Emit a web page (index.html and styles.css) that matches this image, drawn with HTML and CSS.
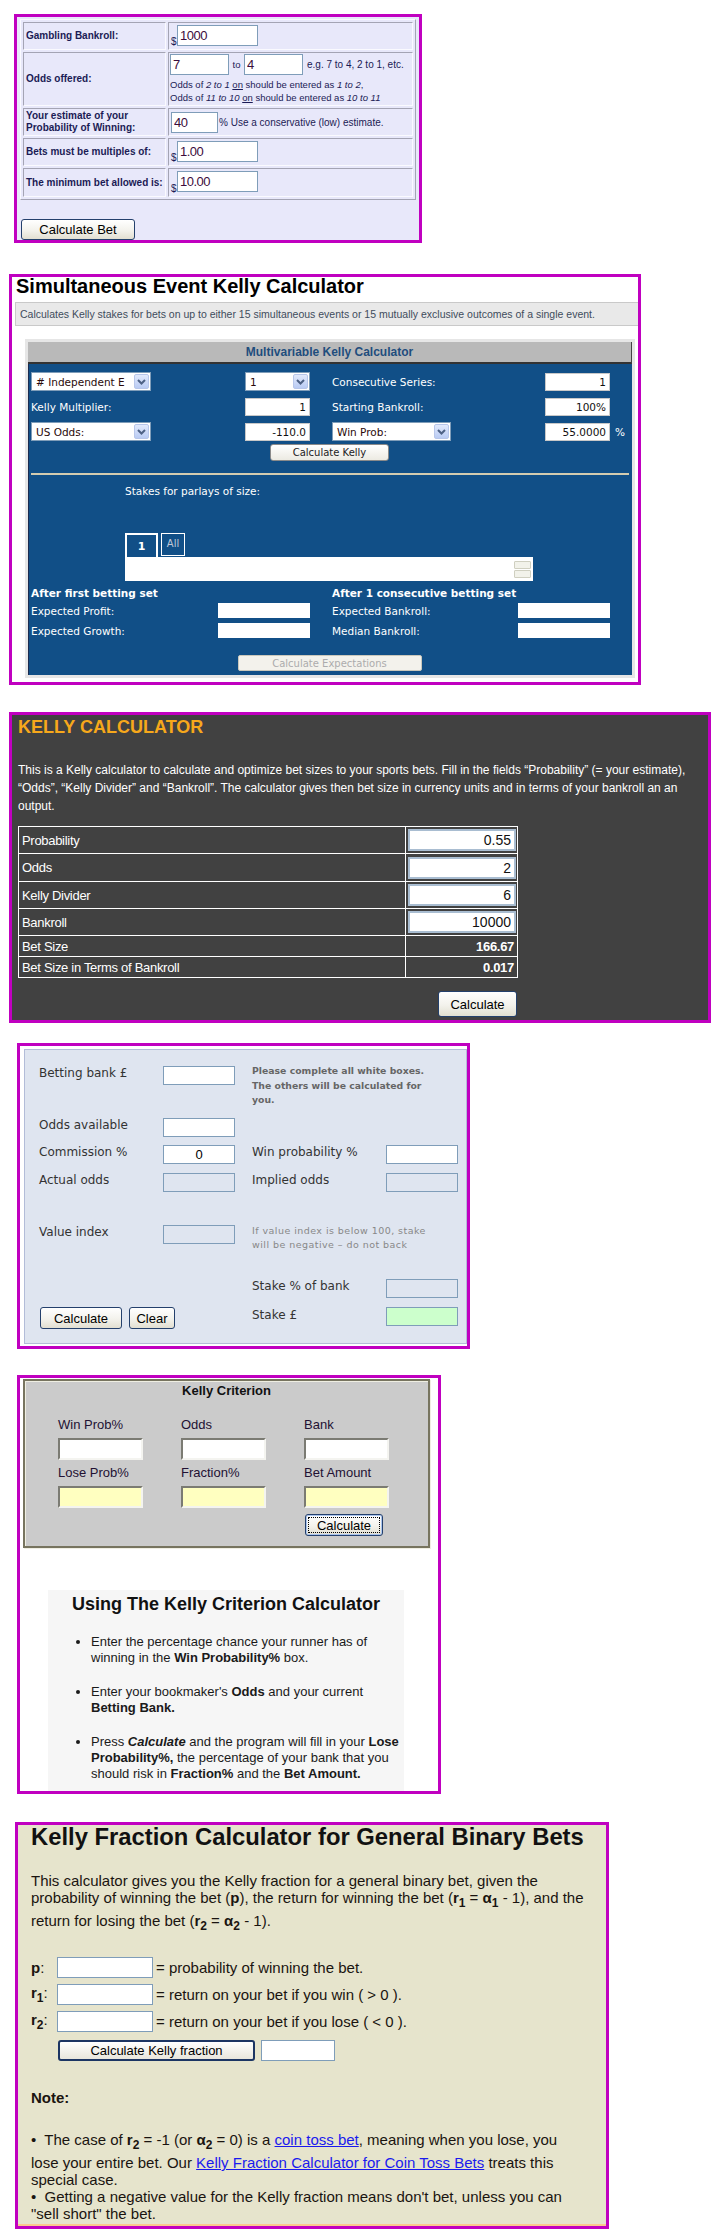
FILE: index.html
```html
<!DOCTYPE html>
<html>
<head>
<meta charset="utf-8">
<title>Kelly Calculators</title>
<link rel="stylesheet" href="styles.css">
</head>
<body>

<div class="s1">
  <table class="bt">
    <tr class="h28"><td class="lab">Gambling Bankroll:</td><td class="val"><span class="dol">$</span><input class="in1" value="1000"></td></tr>
    <tr class="h54"><td class="lab">Odds offered:</td><td class="val">
      <div class="oddsline"><input class="in2" value="7"><span class="to">to</span><input class="in2" value="4"><span class="eg">e.g. 7 to 4, 2 to 1, etc.</span></div>
      <div class="note1">Odds of <i>2 to 1</i> <u>on</u> should be entered as <i>1 to 2</i>,<br>Odds of <i>11 to 10</i> <u>on</u> should be entered as <i>10 to 11</i></div>
    </td></tr>
    <tr class="h28"><td class="lab">Your estimate of your<br>Probability of Winning:</td><td class="val"><input class="in3" value="40"><span class="eg pct">% Use a conservative (low) estimate.</span></td></tr>
    <tr class="h28"><td class="lab">Bets must be multiples of:</td><td class="val"><span class="dol">$</span><input class="in1" value="1.00"></td></tr>
    <tr class="h29"><td class="lab">The minimum bet allowed is:</td><td class="val"><span class="dol">$</span><input class="in1" value="10.00"></td></tr>
  </table>
  <button class="xpbtn calcbet">Calculate Bet</button>
</div>

<div class="s2">
  <h1 class="sek">Simultaneous Event Kelly Calculator</h1>
  <div class="desc">Calculates Kelly stakes for bets on up to either 15 simultaneous events or 15 mutually exclusive outcomes of a single event.</div>
  <div class="mk">
    <div class="mkhead">Multivariable Kelly Calculator</div>
    <div class="mkbody">
      <div class="mkgrid">
        <div class="half">
          <div class="mrow">
            <div class="sel w120"><span class="st"># Independent E</span><span class="arr"><svg width="9" height="6" viewBox="0 0 9 6"><path d="M1 1 L4.5 4.5 L8 1" fill="none" stroke="#4d6185" stroke-width="2"/></svg></span></div>
            <div class="sel w65 push"><span class="st">1</span><span class="arr"><svg width="9" height="6" viewBox="0 0 9 6"><path d="M1 1 L4.5 4.5 L8 1" fill="none" stroke="#4d6185" stroke-width="2"/></svg></span></div>
          </div>
          <div class="mrow"><span>Kelly Multiplier:</span><input class="nin push" value="1"></div>
          <div class="mrow">
            <div class="sel w120"><span class="st">US Odds:</span><span class="arr"><svg width="9" height="6" viewBox="0 0 9 6"><path d="M1 1 L4.5 4.5 L8 1" fill="none" stroke="#4d6185" stroke-width="2"/></svg></span></div>
            <input class="nin push" value="-110.0">
          </div>
        </div>
        <div class="half">
          <div class="mrow"><span>Consecutive Series:</span><input class="nin push" value="1"><span class="unit"></span></div>
          <div class="mrow"><span>Starting Bankroll:</span><input class="nin push" value="100%"><span class="unit"></span></div>
          <div class="mrow">
            <div class="sel w119"><span class="st">Win Prob:</span><span class="arr"><svg width="9" height="6" viewBox="0 0 9 6"><path d="M1 1 L4.5 4.5 L8 1" fill="none" stroke="#4d6185" stroke-width="2"/></svg></span></div>
            <input class="nin push" value="55.0000"><span class="unit">%</span>
          </div>
        </div>
      </div>
      <div class="ckwrap"><button class="ckbtn">Calculate Kelly</button></div>
      <div class="sep"></div>
      <div class="stakes">
        <div class="stt">Stakes for parlays of size:</div>
        <div class="tabs"><span class="tab1">1</span><span class="tab2">All</span></div>
        <div class="sbox"><span class="spin"><i></i><i></i></span></div>
      </div>
      <div class="mkgrid after">
        <div class="half">
          <div class="ah">After first betting set</div>
          <div class="arow"><span>Expected Profit:</span><input class="ain"></div>
          <div class="arow"><span>Expected Growth:</span><input class="ain"></div>
        </div>
        <div class="half">
          <div class="ah">After 1 consecutive betting set</div>
          <div class="arow"><span>Expected Bankroll:</span><input class="ain"><span class="unit"></span></div>
          <div class="arow"><span>Median Bankroll:</span><input class="ain"><span class="unit"></span></div>
        </div>
      </div>
      <div class="ckwrap"><button class="cebtn" disabled>Calculate Expectations</button></div>
    </div>
  </div>
</div>

<div class="s3">
  <h2 class="kc">KELLY CALCULATOR</h2>
  <p class="kcp">This is a Kelly calculator to calculate and optimize bet sizes to your sports bets. Fill in the fields “Probability” (= your estimate),<br>“Odds”, “Kelly Divider” and “Bankroll”. The calculator gives then bet size in currency units and in terms of your bankroll an an<br>output.</p>
  <table class="kt">
    <tr class="ri"><td>Probability</td><td class="v"><input value="0.55"></td></tr>
    <tr class="ri2"><td>Odds</td><td class="v"><input value="2"></td></tr>
    <tr class="ri"><td>Kelly Divider</td><td class="v"><input value="6"></td></tr>
    <tr class="ri"><td>Bankroll</td><td class="v"><input value="10000"></td></tr>
    <tr class="rr"><td>Bet Size</td><td class="v b">166.67</td></tr>
    <tr class="rr"><td>Bet Size in Terms of Bankroll</td><td class="v b">0.017</td></tr>
  </table>
  <div class="kcbw"><button class="xpbtn kcb">Calculate</button></div>
</div>

<div class="s4">
  <div class="vp">
    <div class="vg">
      <span class="vl c1">Betting bank £</span><input class="vi w c2"><div class="vn1">Please complete all white boxes.<br>The others will be calculated for<br>you.</div>
      <span class="vl c1">Odds available</span><input class="vi w c2">
      <span class="vl c1">Commission %</span><input class="vi w c2" value="0"><span class="vl c4">Win probability %</span><input class="vi w c5">
      <span class="vl c1">Actual odds</span><input class="vi c2"><span class="vl c4">Implied odds</span><input class="vi c5">
      <span class="vl c1">Value index</span><input class="vi c2"><div class="vn2">If value index is below 100, stake<br>will be negative – do not back</div>
      <span class="vl c4">Stake % of bank</span><input class="vi c5">
      <div class="vbtns"><button class="xpbtn vb1">Calculate</button><button class="xpbtn vb2">Clear</button></div><span class="vl c4 st8">Stake £</span><input class="vi g c5">
    </div>
  </div>
</div>

<div class="s5">
  <div class="kcf">
    <div class="kct">Kelly Criterion</div>
    <div class="kg">
      <span>Win Prob%</span><span>Odds</span><span>Bank</span>
      <input class="ki"><input class="ki"><input class="ki">
      <span>Lose Prob%</span><span>Fraction%</span><span>Bet Amount</span>
      <input class="ki y"><input class="ki y"><input class="ki y">
      <button class="xpbtn kgb">Calculate</button>
    </div>
  </div>
  <div class="use">
    <h3>Using The Kelly Criterion Calculator</h3>
    <ul>
      <li>Enter the percentage chance your runner has of<br>winning in the <b>Win Probability%</b> box.</li>
      <li>Enter your bookmaker's <b>Odds</b> and your current<br><b>Betting Bank.</b></li>
      <li>Press <b><i>Calculate</i></b> and the program will fill in your <b>Lose<br>Probability%,</b> the percentage of your bank that you<br>should risk in <b>Fraction%</b> and the <b>Bet Amount.</b></li>
    </ul>
  </div>
</div>

<div class="s6">
  <div class="kfin">
    <h2 class="kf">Kelly Fraction Calculator for General Binary Bets</h2>
    <p class="kfp">This calculator gives you the Kelly fraction for a general binary bet, given the<br>probability of winning the bet (<b>p</b>), the return for winning the bet (<b>r<sub>1</sub></b> = <b>α<sub>1</sub></b> - 1), and the<br>return for losing the bet (<b>r<sub>2</sub></b> = <b>α<sub>2</sub></b> - 1).</p>
    <div class="kfrows">
      <div class="kfrow"><span class="kfl"><b>p</b>:</span><input class="kfi"><span class="kft">= probability of winning the bet.</span></div>
      <div class="kfrow"><span class="kfl"><b>r<sub>1</sub></b>:</span><input class="kfi"><span class="kft">= return on your bet if you win ( &gt; 0 ).</span></div>
      <div class="kfrow"><span class="kfl"><b>r<sub>2</sub></b>:</span><input class="kfi"><span class="kft">= return on your bet if you lose ( &lt; 0 ).</span></div>
    </div>
    <div class="kfbr"><button class="kfb">Calculate Kelly fraction</button><input class="kfo"></div>
    <div class="kfnote">Note:</div>
    <p class="kfn">&bull;&nbsp; The case of <b>r<sub>2</sub></b> = -1 (or <b>α<sub>2</sub></b> = 0) is a <a href="#">coin toss bet</a>, meaning when you lose, you<br>lose your entire bet. Our <a href="#">Kelly Fraction Calculator for Coin Toss Bets</a> treats this<br>special case.<br>&bull;&nbsp; Getting a negative value for the Kelly fraction means don't bet, unless you can<br>"sell short" the bet.</p>
  </div>
  <div class="kfend"></div>
</div>

</body>
</html>
```

FILE: styles.css
```css
* { box-sizing: border-box; }
body { margin: 0; font-family: "Liberation Sans", Arial, sans-serif; background: #fff; color: #000; }
input, button { margin: 0; font-family: "Liberation Sans", Arial, sans-serif; }

.s1, .s2, .s3, .s4, .s5, .s6 { border: 3px solid #c000c0; }

.xpbtn {
  font-size: 13px; color: #000; padding: 0;
  background: linear-gradient(#ffffff, #f3f2ec 55%, #e2dfd1);
  border: 1px solid #24406c; border-radius: 3px;
}

/* ---------- section 1 ---------- */
.s1 { margin: 14px 0 0 14px; width: 408px; background: #e8e8fa; padding: 2px 2px 0 3px; }
.bt { border-collapse: separate; border-spacing: 2px; border: 1px solid; border-color: #fafaff #a4a4b4 #a4a4b4 #fafaff; width: 396px; table-layout: fixed; }
.bt td { border: 1px solid; border-color: #a4a4b4 #fafaff #fafaff #a4a4b4; padding: 0 2px; vertical-align: middle; color: #1b1b55; }
.bt td.lab { width: 143px; font-size: 10px; font-weight: bold; line-height: 12px; }
.h28 { height: 28px; } .h54 { height: 54px; } .h29 { height: 29px; }
.dol { display: inline-block; width: 6px; font-size: 10px; vertical-align: -6px; }
.bt input { height: 21px; border: 1px solid #7f9db9; background: #fff; font-size: 13px; color: #3c0c3c; padding: 0 2px; vertical-align: middle; letter-spacing: -0.5px; }
.in1 { width: 81px; } .in2 { width: 59px; } .in3 { width: 47px; }
.oddsline { white-space: nowrap; margin-left: -1px; }
.to { display: inline-block; width: 15px; text-align: center; font-size: 9.5px; vertical-align: middle; }
.eg { font-size: 10px; margin-left: 4px; vertical-align: middle; }
.eg.pct { margin-left: 1px; }
.note1 { font-size: 9.5px; line-height: 13px; margin-top: 3px; white-space: nowrap; margin-left: -1px; }
.calcbet { display: block; width: 114px; height: 21px; margin: 19px 0 0 1px; }

/* ---------- section 2 ---------- */
.s2 { margin: 31px 0 0 9px; width: 632px; background: #fff; padding: 0 0 4px 0; }
.sek { margin: 0 0 7px 4px; font-size: 20px; line-height: 18px; font-weight: bold; color: #000; }
.desc { margin: 0 0 0 3px; height: 24px; border: 1px solid #c9c9c9; border-right: 0; background: #e9e9e9; font-size: 10.5px; line-height: 22px; padding-left: 4px; color: #3e4c5c; white-space: nowrap; }
.mk { margin: 13px 3px 0 13px; background: #e6e6e6; padding: 3px; }
.mkhead { height: 22px; background: #b9b9b9; border-bottom: 2px solid #333; border-right: 1px solid #444; text-align: center; font-size: 12px; font-weight: bold; color: #1f4d7d; line-height: 21px; }
.mkbody { background: #114f87; border-left: 1px solid #1b2c50; padding: 8px 0 4px 2px; font-family: "DejaVu Sans", Verdana, sans-serif; font-size: 10.5px; color: #fff; }
.mkgrid { display: grid; grid-template-columns: 279px 294px; column-gap: 22px; }
.half { display: flex; flex-direction: column; gap: 6px; }
.mrow { display: flex; align-items: center; height: 19px; white-space: nowrap; }
.push { margin-left: auto; }
.unit { width: 16px; padding-left: 5px; }
.sel { display: flex; align-items: center; height: 19px; background: #fff; border: 1px solid #7f9db9; color: #2a0a0a; }
.sel .st { flex: 1; padding-left: 4px; white-space: nowrap; overflow: hidden; }
.w120 { width: 120px; } .w119 { width: 119px; } .w65 { width: 65px; }
.arr { display: flex; align-items: center; justify-content: center; width: 15px; height: 15px; margin-right: 1px; background: linear-gradient(#e1e9fc, #b9cbf4); border: 1px solid #b7c6ea; border-radius: 2px; }
.nin { width: 65px; height: 18px; border: 1px solid #c8c8c8; background: #fff; text-align: right; font: 10.5px "DejaVu Sans", Verdana, sans-serif; color: #111; padding: 0 3px; }
.ckwrap { display: flex; justify-content: center; margin-right: 4px; }
.ckbtn { margin-top: 3px; width: 119px; height: 17px; border: 1px solid #8a8a8a; border-radius: 3px; background: linear-gradient(#fff, #eceae2); font: 10px "DejaVu Sans", Verdana, sans-serif; color: #222; padding: 0; }
.sep { margin: 12px 3px 0 0; height: 2px; background: #d4ccb0; }
.stakes { margin: 9px 0 0 94px; width: 408px; }
.stt { line-height: 14px; }
.tabs { margin-top: 35px; display: flex; gap: 3px; height: 24px; }
.tab1 { width: 33px; height: 24px; border: 2px solid #fff; border-bottom: 0; text-align: center; font-weight: bold; line-height: 24px; font-size: 11px; }
.tab2 { width: 24px; height: 23px; border: 1px solid #fff; color: #c0c8d8; font-size: 10px; text-align: center; line-height: 20px; }
.sbox { height: 24px; background: #fff; display: flex; justify-content: flex-end; align-items: center; padding-right: 2px; }
.spin { display: flex; flex-direction: column; gap: 1px; width: 17px; }
.spin i { display: block; height: 8px; border: 1px solid #cfcfc0; background: #f2f2ea; border-radius: 1px; }
.after { margin-top: 5px; }
.after .half { gap: 5px; }
.ah { font-weight: bold; line-height: 14px; margin-bottom: -2px; white-space: nowrap; }
.arow { display: flex; align-items: center; height: 15px; white-space: nowrap; }
.ain { margin-left: auto; width: 92px; height: 15px; background: #fff; border: 0; }
.cebtn { margin-top: 17px; width: 184px; height: 16px; border: 1px solid #cac8bc; border-radius: 2px; background: #f3f2ec; color: #acacac; font: 10px "DejaVu Sans", Verdana, sans-serif; padding: 0; }

/* ---------- section 3 ---------- */
.s3 { margin: 27px 0 0 9px; width: 702px; background: #414141; padding: 2px 0 3px 6px; color: #fff; }
.kc { margin: 0; font-size: 18px; line-height: 20px; color: #f7a81b; font-weight: bold; }
.kcp { margin: 24px 0 0; font-size: 12px; line-height: 18px; white-space: nowrap; }
.kt { margin-top: 11px; border-collapse: collapse; width: 500px; border: 1px solid #fff; table-layout: fixed; }
.kt td { border: 1px solid #fff; padding: 0 0 0 3px; font-size: 13px; letter-spacing: -0.3px; vertical-align: middle; }
.kt td.v { width: 112px; padding: 0 1px 0 2px; text-align: right; }
.kt td.b { font-weight: bold; padding-right: 3px; }
.ri { height: 27px; } .ri2 { height: 28px; } .rr { height: 21px; }
.kt input { display: block; width: 108px; height: 22px; border: 2px solid #a9bdd1; background: #fff; text-align: right; font-size: 14px; color: #111; padding: 0 3px; }
.kcbw { width: 500px; text-align: right; margin-top: 13px; }
.kcb { width: 79px; height: 26px; margin-right: 1px; vertical-align: top; }

/* ---------- section 4 ---------- */
.s4 { margin: 20px 0 0 17px; width: 453px; background: #fff; padding: 3px 0 2px 4px; }
.vp { background: #dfe5f0; border: 1px solid #b3bcd8; padding: 16px 0 14px 14px; font-family: "DejaVu Sans", Verdana, sans-serif; font-size: 12px; color: #333; }
.vg { display: grid; grid-template-columns: 124px 72px 17px 134px 72px; grid-template-rows: 52px 27px 28px 52px 54px 28px 22px; align-items: start; }
.vl { line-height: 14px; white-space: nowrap; }
.st8 { margin-top: 1px; }
.vi { width: 72px; height: 19px; border: 1px solid #7f9db9; background: transparent; padding: 0; font: 13px "Liberation Sans", Arial, sans-serif; text-align: center; color: #000; }
.vi.w { background: #fff; }
.vi.g { background: #ccffcc; }
.c1 { grid-column: 1; } .c2 { grid-column: 2; } .c4 { grid-column: 4; } .c5 { grid-column: 5; }
.vn1 { grid-column: 4 / 6; font-size: 9.3px; font-weight: bold; color: #666; line-height: 14.5px; margin-top: -2px; white-space: nowrap; }
.vn2 { grid-column: 4 / 6; font-size: 9.5px; color: #888; line-height: 14px; margin-top: -1px; white-space: nowrap; letter-spacing: 0.45px; }
.vbtns { grid-column: 1 / 4; display: flex; gap: 7px; padding-left: 1px; }
.vb1 { width: 82px; height: 22px; }
.vb2 { width: 46px; height: 22px; }

/* ---------- section 5 ---------- */
.s5 { margin: 26px 0 0 17px; width: 424px; background: #fff; padding: 1px 0 0 3px; }
.kcf { width: 407px; background: #cbcbcb; border: 2px solid #77745f; box-shadow: inset 1px 1px 0 #efeee2, 1px 1px 0 #efeee2; padding: 2px 0 10px 33px; font-size: 13px; color: #221133; }
.kct { text-align: center; font-weight: bold; line-height: 16px; color: #111; margin-left: -33px; }
.kg { display: grid; grid-template-columns: 123px 123px 123px; row-gap: 5px; margin-top: 18px; }
.kg span { line-height: 16px; }
.ki { width: 85px; height: 22px; border: 2px solid; border-color: #7b7b73 #f4f4f0 #f4f4f0 #7b7b73; background: #fff; }
.ki.y { background: #ffffc0; }
.kgb { grid-column: 3; width: 78px; height: 22px; margin: 1px 0 0 1px; box-shadow: inset 0 0 0 1px #a9c4ee; outline: 1px dotted #000; outline-offset: -4px; }
.use { margin: 42px 0 0 25px; width: 356px; background: #f6f6f6; padding: 3px 0 9px 0; }
.use h3 { margin: 0; font-size: 18px; line-height: 22px; text-align: center; color: #111; }
.use ul { margin: 19px 0 0; padding-left: 43px; font-size: 13px; line-height: 16px; color: #1a1a1a; }
.use li { margin-bottom: 18px; white-space: nowrap; }
.use li:last-child { margin-bottom: 0; }

/* ---------- section 6 ---------- */
.s6 { margin: 28px 0 0 15px; width: 594px; background: #e6e4cc; color: #1a1410; font-size: 15px; }
.kfin { padding: 0 13px; }
.kf { margin: 0; font-size: 23.8px; line-height: 24px; font-weight: bold; color: #111; }
.kfp { margin: 23px 0 0; line-height: 17px; white-space: nowrap; }
sub { font-size: 12px; font-weight: bold; }
.kfrows { margin-top: 22px; display: flex; flex-direction: column; gap: 6px; }
.kfrow { display: flex; align-items: center; height: 21px; white-space: nowrap; }
.kfl { width: 26px; }
.kfi { width: 96px; height: 21px; border: 1px solid #7f9db9; background: #fff; }
.kft { margin-left: 3px; }
.kfbr { margin: 8px 0 0 27px; display: flex; gap: 6px; align-items: center; }
.kfb { width: 197px; height: 21px; font-size: 13px; border: 2px solid #1c3563; border-radius: 3px; background: linear-gradient(#fff, #e8e6dc); padding: 0; color: #000; }
.kfo { width: 74px; height: 21px; border: 1px solid #7f9db9; background: #fff; }
.kfnote { margin-top: 28px; font-weight: bold; line-height: 17px; }
.kfn { margin: 25px 0 0; line-height: 17px; white-space: nowrap; }
.kfn a { color: #1a1aee; text-decoration: underline; }
.kfend { height: 2px; background: #fcc88e; margin-top: 2px; }
```
